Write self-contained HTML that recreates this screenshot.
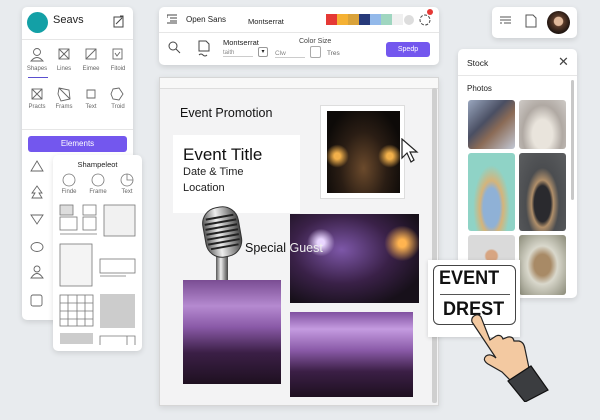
<!DOCTYPE html>
<html><head><meta charset="utf-8"><style>
*{box-sizing:border-box;margin:0;padding:0}
body{width:600px;height:420px;overflow:hidden;background:#e8ebee;font-family:"Liberation Sans",sans-serif;position:relative;color:#222}
.a{position:absolute}
.card{position:absolute;background:#fff;border-radius:5px;box-shadow:0 2px 6px rgba(0,0,0,.12)}
.lbl{position:absolute;font-size:6px;color:#666;text-align:center;width:26px}
</style></head><body>

<!-- Left panel -->
<div class="card" style="left:22px;top:7px;width:111px;height:313px"></div>
<div class="a" style="left:27px;top:12px;width:21px;height:21px;border-radius:50%;background:#13a0a6"></div>
<div class="a" style="left:53px;top:14px;font-size:11px;color:#222">Seavs</div>
<svg class="a" style="left:113px;top:15px" width="12" height="13"><rect x="1" y="2" width="9" height="10" fill="none" stroke="#444"/><path d="M3 9 L9 3 M7 1 L10 1 L10 4" stroke="#444" fill="none"/></svg>
<div class="a" style="left:22px;top:39px;width:111px;height:1px;background:#e6e6e6"></div>
<svg class="a" style="left:22px;top:44px" width="111" height="70" stroke="#666" fill="none" stroke-width=".9">
<circle cx="15" cy="8" r="3.5"/><path d="M9 17 Q15 10 21 17 Z"/>
<rect x="37" y="5" width="10" height="10"/><path d="M37 5 L47 15 M47 5 L37 15"/>
<rect x="64" y="5" width="10" height="10"/><path d="M64 15 L74 5"/>
<rect x="91" y="5" width="9" height="10"/><path d="M93 9 L95 12 L98 8"/>
<rect x="10" y="45" width="10" height="10"/><path d="M10 45 L20 55 M20 45 L10 55"/>
<path d="M37 44 L47 46 L48 55 L39 57 L36 50 Z M37 44 L48 55"/>
<path d="M65 46 L73 46 L73 54 L65 54 Z"/>
<path d="M91 45 L97 44 L101 50 L97 56 L91 55 L89 50 Z"/>
</svg>
<div class="lbl" style="left:24px;top:66px">Shapes</div>
<div class="lbl" style="left:51px;top:66px">Lines</div>
<div class="lbl" style="left:78px;top:66px">Eimee</div>
<div class="lbl" style="left:105px;top:66px">Fitoid</div>
<div class="a" style="left:28px;top:77px;width:20px;height:1px;background:#5a4fcf"></div>
<div class="lbl" style="left:24px;top:104px">Practs</div>
<div class="lbl" style="left:51px;top:104px">Frams</div>
<div class="lbl" style="left:78px;top:104px">Text</div>
<div class="lbl" style="left:105px;top:104px">Troid</div>
<div class="a" style="left:22px;top:129px;width:111px;height:1px;background:#e6e6e6"></div>
<div class="a" style="left:28px;top:136px;width:99px;height:16px;background:#7357ee;border-radius:3px;color:#fff;font-size:8px;text-align:center;line-height:16px">Elements</div>
<svg class="a" style="left:28px;top:157px" width="20" height="150" stroke="#666" fill="none" stroke-width=".9">
<path d="M9 4 L15 14 L3 14 Z"/>
<path d="M9 29 L14 36 L11 36 L14 41 L4 41 L7 36 L4 36 Z"/>
<path d="M3 58 L15 58 L9 67 Z"/>
<ellipse cx="9" cy="90" rx="6" ry="4.5"/>
<circle cx="9" cy="112" r="3"/><path d="M3 121 Q9 112 15 121 Z"/>
<rect x="3" y="138" width="11" height="11" rx="2"/>
</svg>

<!-- Shampeleot popup -->
<div class="card" style="left:53px;top:155px;width:89px;height:196px"></div>
<div class="a" style="left:53px;top:160px;width:89px;text-align:center;font-size:7.5px;color:#222">Shampeleot</div>
<svg class="a" style="left:53px;top:170px" width="89" height="180" stroke="#777" fill="none" stroke-width=".8">
<circle cx="16" cy="10" r="6"/><circle cx="45" cy="10" r="6"/><circle cx="74" cy="10" r="6"/><path d="M74 4 L74 10 L80 10"/>
<rect x="7" y="35" width="13" height="10" fill="#ddd"/><rect x="30" y="35" width="13" height="10"/><rect x="7" y="47" width="17" height="13"/><rect x="30" y="47" width="13" height="13"/><path d="M7 64 L44 64"/>
<rect x="51" y="35" width="31" height="31" fill="#f1f1f1"/>
<rect x="7" y="74" width="32" height="42" fill="#f4f4f4"/>
<rect x="47" y="89" width="35" height="14"/><path d="M47 106 L73 106"/>
<rect x="7" y="125" width="33" height="31"/><path d="M15 125 V156 M24 125 V156 M32 125 V156 M7 133 H40 M7 141 H40 M7 149 H40"/>
<rect x="47" y="124" width="35" height="34" fill="#ccc" stroke="none"/>
<rect x="7" y="163" width="33" height="11" fill="#ccc" stroke="none"/>
<path d="M47 175 V166 H82 V175 M74 166 V175"/>
</svg>
<div class="lbl" style="left:56px;top:189px">Finde</div>
<div class="lbl" style="left:85px;top:189px">Frame</div>
<div class="lbl" style="left:114px;top:189px">Text</div>

<!-- Toolbar -->
<div class="card" style="left:159px;top:7px;width:280px;height:58px"></div>
<div class="a" style="left:159px;top:32px;width:280px;height:1px;background:#e6e6e6"></div>
<svg class="a" style="left:167px;top:14px" width="11" height="10" stroke="#444" stroke-width="1"><path d="M0 1H10M3 4H10M3 7H10M0 9H10M0 1V4"/></svg>
<div class="a" style="left:186px;top:15px;font-size:8px">Open Sans</div>
<div class="a" style="left:248px;top:17px;font-size:7.5px">Montserrat</div>
<div class="a" style="left:326px;top:14px;width:11px;height:11px;background:#e53935"></div>
<div class="a" style="left:337px;top:14px;width:11px;height:11px;background:#f5b133"></div>
<div class="a" style="left:348px;top:14px;width:11px;height:11px;background:#d9a23a"></div>
<div class="a" style="left:359px;top:14px;width:11px;height:11px;background:#273a7a"></div>
<div class="a" style="left:370px;top:14px;width:11px;height:11px;background:#93b9ea"></div>
<div class="a" style="left:381px;top:14px;width:11px;height:11px;background:#9fd6c0"></div>
<div class="a" style="left:392px;top:14px;width:11px;height:11px;background:#f0f0f0"></div>
<div class="a" style="left:404px;top:15px;width:10px;height:10px;border-radius:50%;background:#ddd"></div>
<svg class="a" style="left:418px;top:13px" width="14" height="14"><circle cx="7" cy="7" r="5" fill="none" stroke="#444" stroke-dasharray="3 1.5"/></svg>
<div class="a" style="left:427px;top:9px;width:6px;height:6px;border-radius:50%;background:#e53935"></div>
<svg class="a" style="left:168px;top:41px" width="14" height="14" stroke="#444" fill="none"><circle cx="5" cy="5" r="4"/><path d="M8 8 L12 12"/></svg>
<svg class="a" style="left:197px;top:40px" width="14" height="18" stroke="#444" fill="none"><path d="M2 1H9L12 4V11H2Z M2 15 Q4 13 6 15 Q8 17 10 15"/></svg>
<div class="a" style="left:223px;top:38px;font-size:7.5px">Montserrat</div>
<div class="a" style="left:223px;top:50px;font-size:6px;color:#888;border-bottom:1px solid #ccc;width:30px">taith</div>
<div class="a" style="left:258px;top:47px;width:10px;height:10px;border:1px solid #999;border-radius:2px;font-size:6px;text-align:center;line-height:9px">▾</div>
<div class="a" style="left:275px;top:50px;font-size:6.5px;color:#888;border-bottom:1px solid #ccc;width:30px">Clw</div>
<div class="a" style="left:299px;top:38px;font-size:7px;color:#444">Color Size</div>
<div class="a" style="left:310px;top:46px;width:11px;height:12px;border:1px solid #aaa;border-radius:2px"></div>
<div class="a" style="left:327px;top:50px;font-size:6.5px;color:#666">Tres</div>
<div class="a" style="left:386px;top:42px;width:44px;height:15px;background:#7357ee;border-radius:3px;color:#fff;font-size:7px;text-align:center;line-height:15px">Spedp</div>

<!-- Right top -->
<div class="card" style="left:492px;top:7px;width:85px;height:31px"></div>
<svg class="a" style="left:500px;top:15px" width="12" height="12" stroke="#555"><path d="M0 2H11M0 5H11M4 8H11M0 8H2"/></svg>
<svg class="a" style="left:525px;top:14px" width="12" height="14" stroke="#555" fill="none"><path d="M1 1H8L11 4V13H1Z"/></svg>
<div class="a" style="left:547px;top:11px;width:23px;height:23px;border-radius:50%;background:radial-gradient(circle at 50% 45%,#e0b89a 0 25%,#5a3b2a 30%,#1e1410 70%)"></div>

<!-- Stock -->
<div class="card" style="left:458px;top:49px;width:119px;height:249px"></div>
<div class="a" style="left:467px;top:58px;font-size:8.5px">Stock</div>
<div class="a" style="left:558px;top:54px;font-size:13px;color:#444">✕</div>
<div class="a" style="left:458px;top:75px;width:119px;height:1px;background:#e6e6e6"></div>
<div class="a" style="left:467px;top:84px;font-size:8px">Photos</div>
<div class="a" style="left:571px;top:80px;width:3px;height:120px;background:#c8c8c8;border-radius:2px"></div>
<div class="a" style="left:468px;top:100px;width:47px;height:49px;border-radius:3px;background:linear-gradient(135deg,#9aa7bf,#4a4f63 40%,#8b6b56 60%,#c3c9d6)"></div>
<div class="a" style="left:519px;top:100px;width:47px;height:49px;border-radius:3px;background:radial-gradient(ellipse at 50% 70%,#e9e4dc 0 30%,#b0a9a3 60%,#cfcbc7)"></div>
<div class="a" style="left:468px;top:153px;width:47px;height:78px;border-radius:3px;background:radial-gradient(ellipse at 50% 70%,#8fb1d6 0 25%,#d5b47a 35%,#8fd3c6 55%)"></div>
<div class="a" style="left:519px;top:153px;width:47px;height:78px;border-radius:3px;background:radial-gradient(ellipse at 50% 65%,#2a2a2e 0 25%,#b08f6a 33%,#4b4d50 50%,#5c5e60)"></div>
<div class="a" style="left:468px;top:235px;width:47px;height:60px;border-radius:3px;background:radial-gradient(circle at 50% 35%,#d7a582 0 12%,#dadada 16%)"></div>
<div class="a" style="left:519px;top:235px;width:47px;height:60px;border-radius:3px;background:radial-gradient(ellipse at 50% 50%,#a88a66 0 25%,#d9d8cc 45%,#8a8a78)"></div>

<!-- Canvas -->
<div class="a" style="left:159px;top:77px;width:280px;height:329px;background:#f3f3f4;border:1px solid #d6d6d6;box-shadow:0 2px 6px rgba(0,0,0,.1)"></div>
<div class="a" style="left:160px;top:78px;width:278px;height:11px;background:#f8f8f8;border-bottom:1px solid #ddd"></div>
<div class="a" style="left:432px;top:88px;width:5px;height:315px;background:#cfcfcf;border-radius:2px"></div>
<div class="a" style="left:180px;top:106px;font-size:12.5px;color:#111">Event Promotion</div>
<div class="a" style="left:173px;top:135px;width:127px;height:78px;background:#fff"></div>
<div class="a" style="left:183px;top:145px;font-size:17px;color:#111">Event Title</div>
<div class="a" style="left:183px;top:166px;font-size:11px;color:#222">Date &amp; Time</div>
<div class="a" style="left:183px;top:182px;font-size:11px;color:#222">Location</div>
<div class="a" style="left:320px;top:105px;width:85px;height:94px;background:#fff;border:1px solid #ddd"></div>
<div class="a" style="left:327px;top:111px;width:73px;height:82px;background:radial-gradient(circle at 14% 55%,#f2b04a 0 4%,transparent 15%),radial-gradient(circle at 86% 55%,#f2b04a 0 4%,transparent 15%),radial-gradient(ellipse at 50% 70%,#6b4a2c 0,#2a1d14 45%,#0d0a08 80%)"></div>
<svg class="a" style="left:400px;top:138px" width="24" height="28"><path d="M2 1 L2 20 L7 15 L11 24 L14 22 L10 14 L17 14 Z" fill="#fff" stroke="#222" stroke-width="1.2"/></svg>
<div class="a" style="left:290px;top:214px;width:129px;height:89px;background:radial-gradient(circle at 24% 32%,#e9d6ff 0 3%,transparent 12%),radial-gradient(circle at 87% 33%,#ffb450 0 3%,transparent 14%),radial-gradient(ellipse at 40% 40%,#7d57a8,#3a2148 45%,#17101a 80%)"></div>
<!-- mic -->
<svg class="a" style="left:198px;top:203px" width="50" height="80">
<defs><linearGradient id="m" x1="0" x2="1"><stop offset="0" stop-color="#555"/><stop offset=".4" stop-color="#eee"/><stop offset="1" stop-color="#444"/></linearGradient></defs>
<rect x="18" y="52" width="12" height="26" fill="url(#m)"/>
<g transform="rotate(-10 24 28)"><rect x="6" y="4" width="36" height="50" rx="16" fill="url(#m)" stroke="#333"/>
<path d="M10 14H38M8 19H40M8 24H40M8 29H40M8 34H40M8 39H40M10 44H38" stroke="#222" stroke-width="2"/></g>
</svg>
<div class="a" style="left:245px;top:241px;font-size:12.5px;color:#111;white-space:nowrap">Special <span style="color:#eee">Guest</span></div>
<div class="a" style="left:183px;top:280px;width:98px;height:104px;background:linear-gradient(180deg,#7a4d93,#b58ad0 25%,#8a5aa8 45%,#3b1f46 70%,#1e1020)"></div>
<div class="a" style="left:290px;top:312px;width:123px;height:85px;background:linear-gradient(180deg,#8050a0,#c49be0 20%,#8a5aa8 45%,#3b1f46 70%,#1e1020)"></div>

<!-- Event Drest -->
<div class="a" style="left:428px;top:260px;width:92px;height:77px;background:#fff;box-shadow:0 1px 4px rgba(0,0,0,.15)"></div>
<div class="a" style="left:433px;top:265px;width:83px;height:60px;border:1.5px solid #444;border-radius:6px"></div>
<div class="a" style="left:439px;top:268px;font-weight:bold;font-size:19px;color:#111;transform:scaleX(.95);transform-origin:left">EVENT</div>
<div class="a" style="left:440px;top:294px;width:70px;height:1px;background:#555"></div>
<div class="a" style="left:443px;top:299px;font-weight:bold;font-size:19px;color:#111;transform:scaleX(.95);transform-origin:left">DREST</div>
<svg class="a" style="left:468px;top:312px" width="85" height="90">
<path d="M6 4 Q10 1 13 5 L22 28 L28 24 Q33 22 35 27 L40 25 Q45 24 46 29 L51 29 Q56 30 57 37 L61 56 L44 70 L34 60 L20 52 Q14 48 18 44 Q22 41 28 46 L4 10 Q3 6 6 4Z" fill="#f3c9a1" stroke="#222" stroke-width="1.2"/>
<path d="M40 69 L63 54 L80 78 L57 90 Z" fill="#3b3d40" stroke="#111" stroke-width="1.2"/>
</svg>
</body></html>
